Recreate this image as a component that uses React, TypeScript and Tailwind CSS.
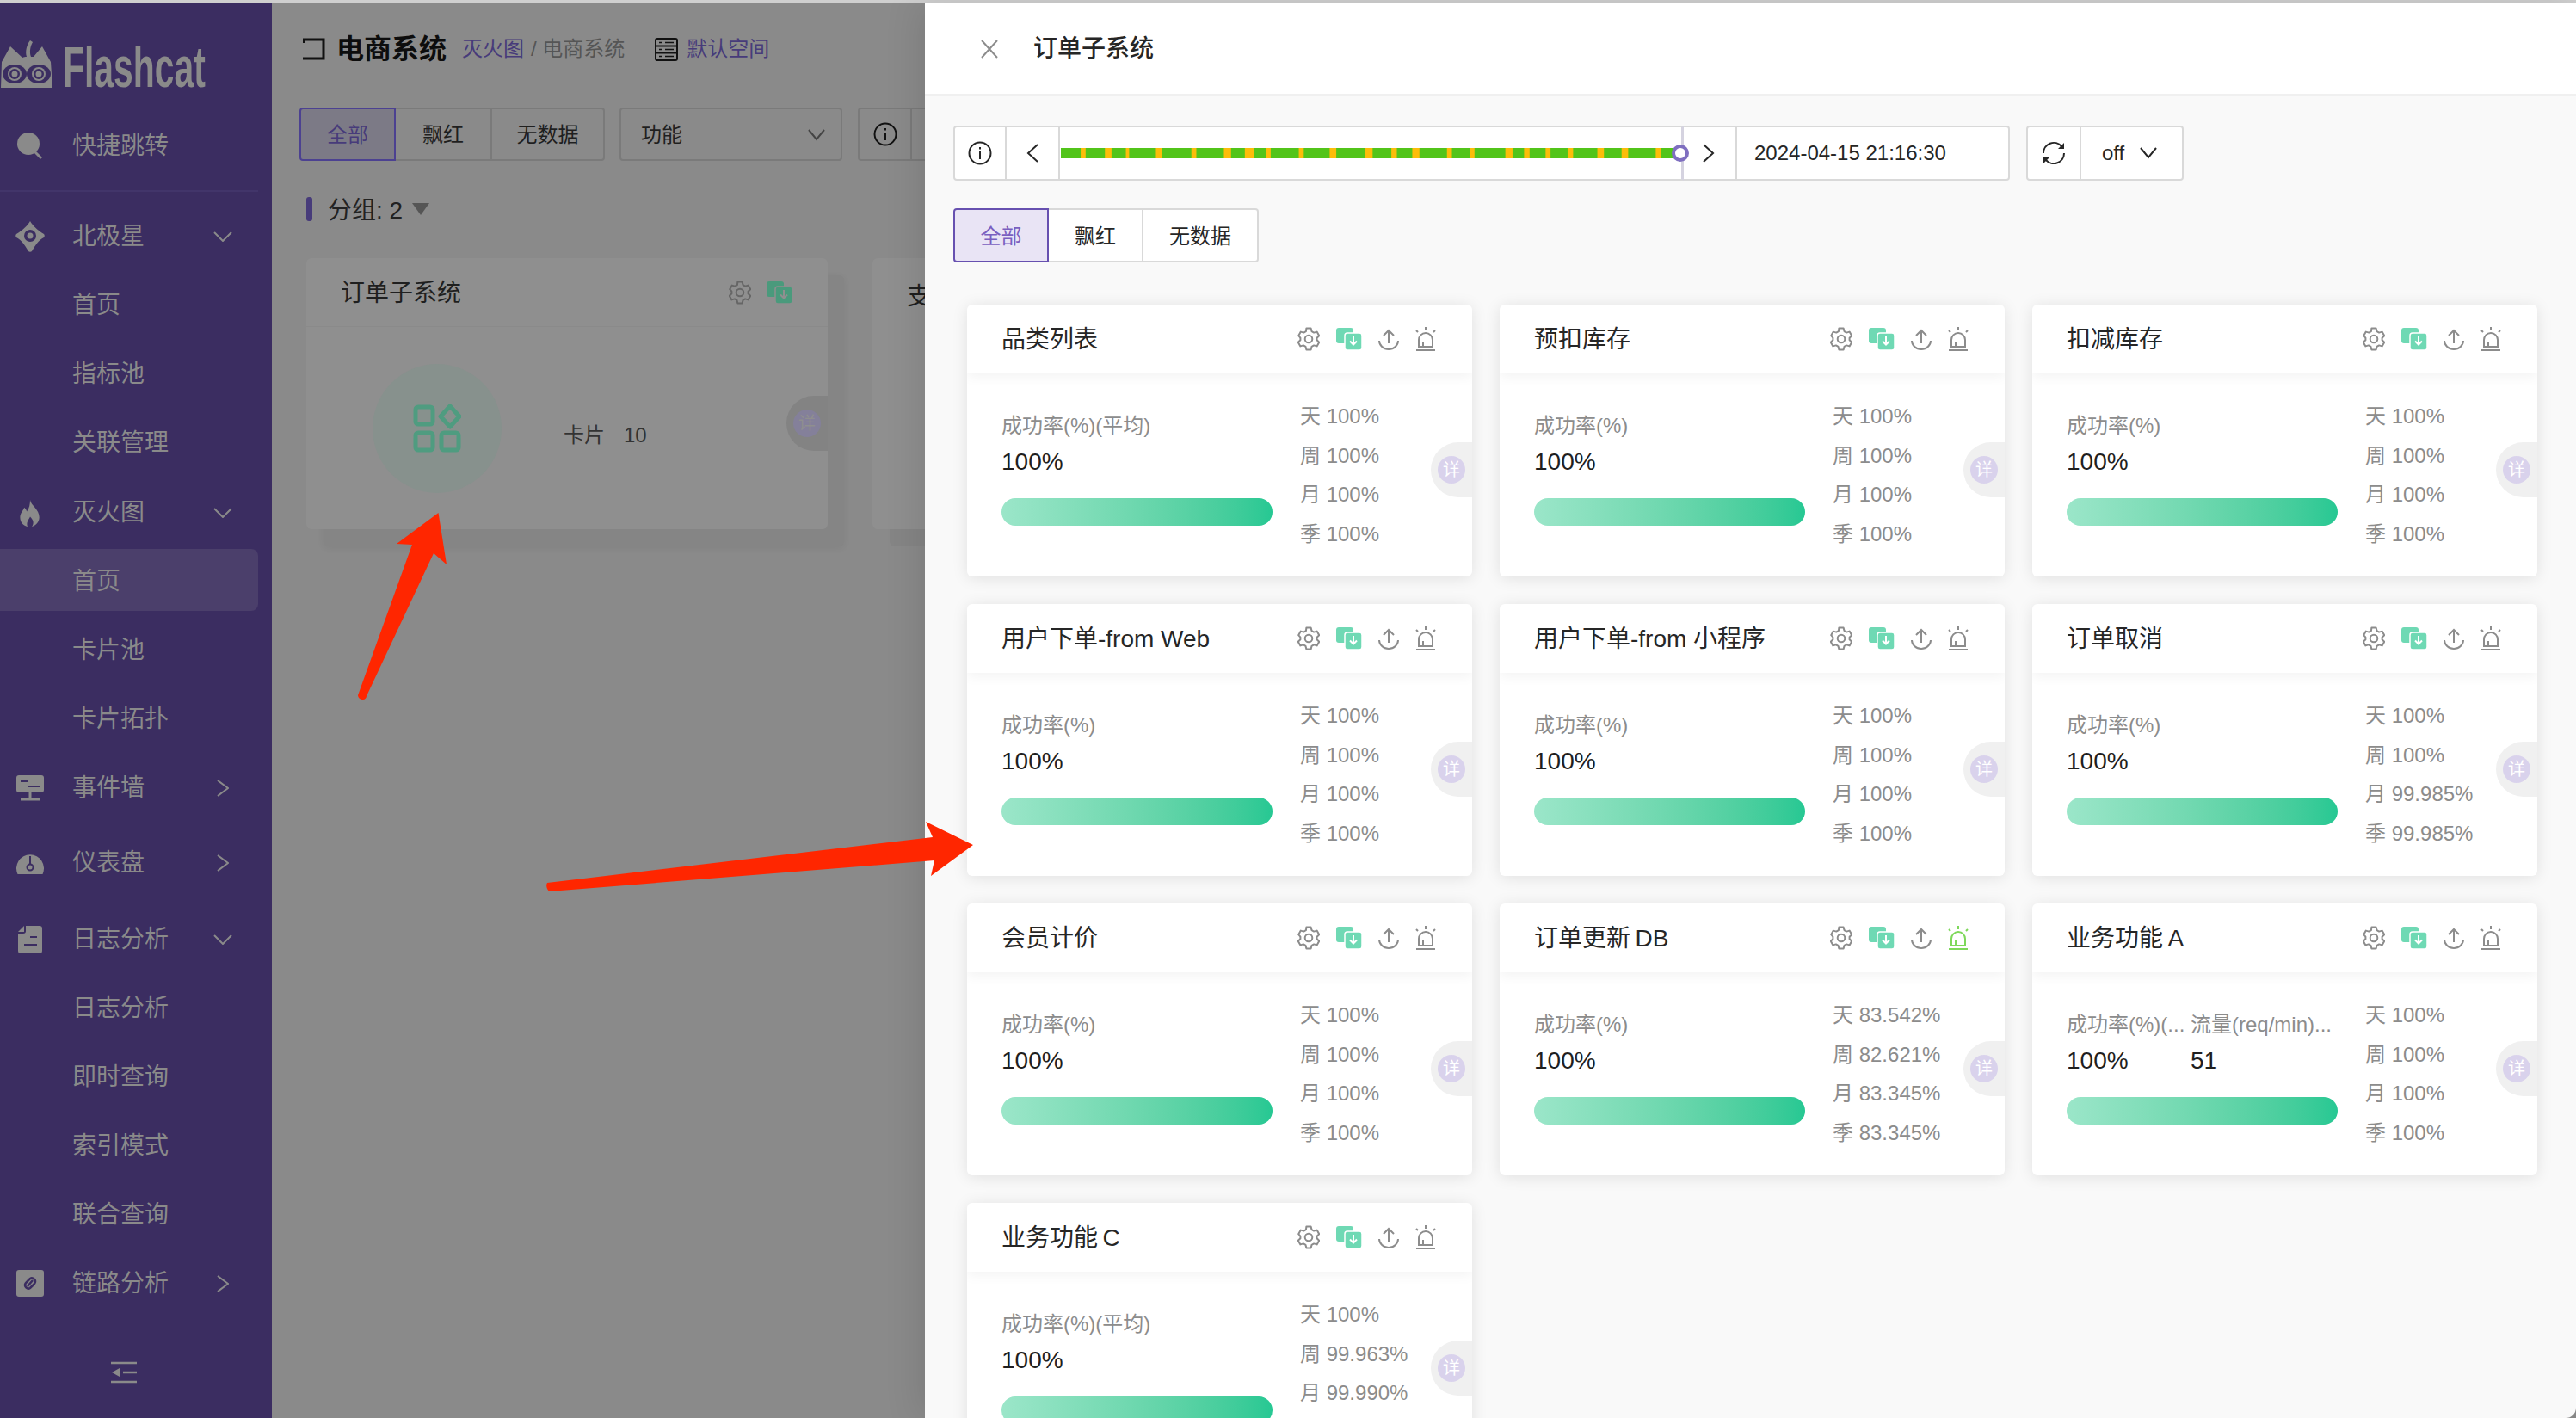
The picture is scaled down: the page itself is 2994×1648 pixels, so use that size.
import React from 'react';

const stripes = [
  [276, 285], [320, 332], [358, 364], [411, 423], [477, 486], [536, 549], [574, 590], [612, 621],
  [672, 681], [728, 740], [793, 806], [840, 850], [878, 891], [941, 950], [982, 991], [1047, 1060],
  [1081, 1091], [1120, 1129], [1160, 1170], [1214, 1226], [1258, 1270], [1320, 1330],
];

const allFull = ['100%', '100%', '100%', '100%'];

const cards = [
  { title: '品类列表', metrics: [{ label: '成功率(%)(平均)', value: '100%' }], stats: allFull },
  { title: '预扣库存', metrics: [{ label: '成功率(%)', value: '100%' }], stats: allFull },
  { title: '扣减库存', metrics: [{ label: '成功率(%)', value: '100%' }], stats: allFull },
  { title: '用户下单-from Web', metrics: [{ label: '成功率(%)', value: '100%' }], stats: allFull },
  { title: '用户下单-from 小程序', metrics: [{ label: '成功率(%)', value: '100%' }], stats: allFull },
  { title: '订单取消', metrics: [{ label: '成功率(%)', value: '100%' }], stats: ['100%', '100%', '99.985%', '99.985%'] },
  { title: '会员计价', metrics: [{ label: '成功率(%)', value: '100%' }], stats: allFull },
  { title: '订单更新\u2009DB', metrics: [{ label: '成功率(%)', value: '100%' }], stats: ['83.542%', '82.621%', '83.345%', '83.345%'], alarm: true },
  {
    title: '业务功能\u2009A',
    metrics: [
      { label: '成功率(%)(...', value: '100%' },
      { label: '流量(req/min)...', value: '51' },
    ],
    stats: allFull,
  },
  // last row is cut by the window, only three stat lines show
  { title: '业务功能\u2009C', metrics: [{ label: '成功率(%)(平均)', value: '100%' }], stats: ['100%', '99.963%', '99.990%'] },
];

const periods = ['天', '周', '月', '季'];

const GearIcon = ({ color = '#8c8c8c' }: { color?: string }) => (
  <svg width="26" height="28" viewBox="0 0 26 28" fill="none" stroke={color} strokeWidth="2" strokeLinejoin="round">
    <path d="M10.4 1.5h5.2l.9 3.6 2.6 1.5 3.5-1 2.6 4.6-2.6 2.5v2.6l2.6 2.5-2.6 4.6-3.5-1-2.6 1.5-.9 3.6h-5.2l-.9-3.6-2.6-1.5-3.5 1-2.6-4.6 2.6-2.5v-2.6L1.2 10.200l2.600-4.600 3.500 1 2.600-1.500z" />
    <circle cx="13" cy="14" r="4.300" />
  </svg>
);

const CopyIcon = ({ color = '#6fd9b4', cut = 'white' }: { color?: string; cut?: string }) => (
  <svg width="30" height="26" viewBox="0 0 30 26">
    <rect x="0" y="0" width="20" height="18" rx="3" fill={color} />
    <rect x="10" y="6" width="20" height="20" rx="3" fill={color} stroke={cut} strokeWidth="1.500" />
    <path d="M20 10v9M16 15.500l4 4 4-4" fill="none" stroke={cut} strokeWidth="2" />
  </svg>
);

const UploadIcon = () => (
  <svg width="24" height="25" viewBox="0 0 24 25" fill="none" stroke="#8c8c8c" strokeWidth="2">
    <path d="M12 17V2M6 8l6-6 6 6" />
    <path d="M1 14a11 10 0 0 0 22 0" />
  </svg>
);

const AlarmIcon = ({ color = '#8c8c8c' }: { color?: string }) => (
  <svg width="24" height="28" viewBox="0 0 24 28" fill="none" stroke={color} strokeWidth="2">
    <path d="M12 0v4M1 4l2 2M23 4l-2 2" />
    <path d="M4 23V15a8 8 0 0 1 16 0v8z" />
    <path d="M9 23v-6" />
    <path d="M1 27h22" />
  </svg>
);

const DetailPill = ({ muted = false }: { muted?: boolean }) => (
  <div
    className={`absolute right-0 top-[80px] flex h-[64px] w-[48px] items-center rounded-l-[32px] pl-[8px] ${
      muted ? 'bg-[#838383]' : 'bg-[#f0f0f0]'
    }`}
  >
    <div
      className={`flex h-[32px] w-[32px] items-center justify-center rounded-[16px] text-[20px] ${
        muted ? 'bg-[#84809a] text-[#8f8f8f]' : 'bg-[#d9d2ec] text-white'
      }`}
    >
      详
    </div>
  </div>
);

const MetricCard = ({ card }: { card: (typeof cards)[number] }) => (
  <div className="h-[316px] w-[587px] overflow-hidden rounded-[6px] bg-white shadow-[0_2px_18px_rgba(0,0,0,0.1)]">
    <div className="relative flex h-[80px] items-center pl-[40px] pr-[42px] shadow-[0_4px_14px_rgba(0,0,0,0.05)]">
      <div className="flex-1 whitespace-nowrap pt-[2px] text-[28px] text-[#262626]">{card.title}</div>
      <div className="flex items-center gap-[19px]">
        <GearIcon />
        <CopyIcon />
        <UploadIcon />
        <AlarmIcon color={card.alarm ? '#7ed85a' : '#8c8c8c'} />
      </div>
    </div>
    <div className="relative flex h-[236px] pl-[40px] pt-[27px]">
      <div className="w-[315px] pt-[16px]">
        <div className="flex">
          {card.metrics.map((m, i) => (
            <div key={m.label} className={card.metrics.length > 1 ? (i === 0 ? 'w-[144px]' : 'w-[171px]') : 'w-full'}>
              <div className="h-[36px] whitespace-nowrap text-[24px] leading-[36px] text-[#8c8c8c]">{m.label}</div>
              <div className="mt-[4px] h-[40px] text-[28px] leading-[40px] text-[#1f1f1f]">{m.value}</div>
            </div>
          ))}
        </div>
        <div className="mt-[22px] h-[32px] rounded-[16px] bg-gradient-to-r from-[#9be6c9] to-[#26c893]" />
      </div>
      <div className="ml-[32px]">
        {card.stats.map((s, i) => (
          <div key={periods[i]} className="h-[45.500px] whitespace-nowrap text-[24px] leading-[45.500px] text-[#8c8c8c]">
            {periods[i]} {s}
          </div>
        ))}
      </div>
      <DetailPill />
    </div>
  </div>
);

const Chevron = ({ open }: { open: boolean }) =>
  open ? (
    <svg width="22" height="12" viewBox="0 0 22 12" fill="none" stroke="#8a8a8a" strokeWidth="2">
      <path d="M1 1l10 10L21 1" />
    </svg>
  ) : (
    <svg width="14" height="20" viewBox="0 0 14 20" fill="none" stroke="#8a8a8a" strokeWidth="2">
      <path d="M1 1l12 9L1 19" />
    </svg>
  );

const navIcons: Record<string, React.ReactNode> = {
  search: (
    <svg width="34" height="34" viewBox="0 0 34 34">
      <circle cx="15" cy="14" r="13" fill="#8a8a8a" />
      <path d="M22 23l8 8" stroke="#8a8a8a" strokeWidth="3" />
    </svg>
  ),
  star: (
    <svg width="34" height="36" viewBox="0 0 34 36">
      <path d="M17 0c3 5 8 10 16 15 1 1 1 3 0 4-6 3-10 9-14 16-1 1-3 1-4 0-4-7-8-13-14-16-1-1-1-3 0-4C9 10 14 5 17 0z" fill="#8a8a8a" />
      <circle cx="17" cy="17" r="7" fill="#3b2d61" />
      <circle cx="17" cy="17" r="3.500" fill="#8a8a8a" />
    </svg>
  ),
  fire: (
    <svg width="30" height="33" viewBox="5 0 24 34">
      <path d="M17 1c1 7 11 11 11 21 0 6-5 10-9 11 3-4 2-8-2-12-2 4-5 7-3 12-5-1-9-5-9-11 0-5 3-7 5-12 2 2 3 4 3 5 3-4 4-9 4-14z" fill="#8a8a8a" />
    </svg>
  ),
  monitor: (
    <svg width="34" height="30" viewBox="0 0 34 30">
      <rect x="1" y="0" width="32" height="20" rx="3" fill="#8a8a8a" />
      <path d="M6 7h9M15 13h13" stroke="#3b2d61" strokeWidth="2" />
      <path d="M17 20v7M6 28h22" stroke="#8a8a8a" strokeWidth="3" />
    </svg>
  ),
  gauge: (
    <svg width="34" height="30" viewBox="0 0 34 30">
      <path d="M2.500 28a16 16 0 1 1 29 0z" fill="#8a8a8a" />
      <path d="M17 7v10" stroke="#3b2d61" strokeWidth="2" />
      <circle cx="17" cy="20" r="3.500" fill="none" stroke="#3b2d61" strokeWidth="2" />
    </svg>
  ),
  file: (
    <svg width="34" height="32" viewBox="0 0 34 32">
      <path d="M12 0h16a3 3 0 0 1 3 3v26a3 3 0 0 1-3 3H6a3 3 0 0 1-3-3V9h6a3 3 0 0 0 3-3z" fill="#8a8a8a" />
      <path d="M3 7l7-7v7z" fill="#8a8a8a" />
      <path d="M17 13h8M10 22h15" stroke="#3b2d61" strokeWidth="2" />
    </svg>
  ),
  link: (
    <svg width="34" height="32" viewBox="0 0 34 32">
      <rect x="1" y="0" width="32" height="31" rx="3" fill="#8a8a8a" />
      <path d="M14 13l3-3c3-2 8 2 5 6l-3 3M20 18l-3 3c-3 2-8-2-5-6l3-3M14 19l6-7" fill="none" stroke="#3b2d61" strokeWidth="2.500" />
    </svg>
  ),
};

const navItems: { label: string; icon?: string; chevron?: 'open' | 'closed'; top: string; active?: boolean }[] = [
  { label: '北极星', icon: 'star', chevron: 'open', top: 'mt-0' },
  { label: '首页', top: 'mt-0' },
  { label: '指标池', top: 'mt-0' },
  { label: '关联管理', top: 'mt-0' },
  { label: '灭火图', icon: 'fire', chevron: 'open', top: 'mt-[1px]' },
  { label: '首页', top: 'mt-0', active: true },
  { label: '卡片池', top: 'mt-0' },
  { label: '卡片拓扑', top: 'mt-0' },
  { label: '事件墙', icon: 'monitor', chevron: 'closed', top: 'mt-0' },
  { label: '仪表盘', icon: 'gauge', chevron: 'closed', top: 'mt-[7px]' },
  { label: '日志分析', icon: 'file', chevron: 'open', top: 'mt-[9px]' },
  { label: '日志分析', top: 'mt-0' },
  { label: '即时查询', top: 'mt-0' },
  { label: '索引模式', top: 'mt-0' },
  { label: '联合查询', top: 'mt-0' },
  { label: '链路分析', icon: 'link', chevron: 'closed', top: 'mt-0' },
];

const Sidebar = () => (
  <aside className="flex h-full w-[316px] shrink-0 flex-col bg-[#3b2d61] text-[28px] text-[#8a8a8a]">
    <div className="flex h-[127px] items-start pt-[43px]">
      <svg width="62" height="58" viewBox="0 0 62 58" className="shrink-0">
        <path
          d="M1 56L2 26 12 8l14 13c2-1 3-1 5-1-2-6 0-14 4-19l3 2c-3 5-4 12-2 17h3L49 8l10 18 2 30z"
          fill="#8a8a8a"
        />
        <ellipse cx="17" cy="40" rx="14" ry="11" fill="#3b2d61" />
        <ellipse cx="45" cy="40" rx="14" ry="11" fill="#3b2d61" />
        <circle cx="17" cy="40" r="8" fill="#8a8a8a" />
        <circle cx="45" cy="40" r="8" fill="#8a8a8a" />
        <circle cx="17" cy="40" r="6" fill="#3b2d61" />
        <circle cx="45" cy="40" r="6" fill="#3b2d61" />
        <circle cx="17" cy="40" r="3.500" fill="#8a8a8a" />
        <circle cx="45" cy="40" r="3.500" fill="#8a8a8a" />
      </svg>
      <div className="ml-[11px] -mt-[6px] origin-left scale-x-[0.61] text-[67px] font-bold leading-[76px]">Flashcat</div>
    </div>
    <div className="flex h-[80px] items-center pl-[18px]">
      <div className="mr-[32px] w-[34px]">{navIcons.search}</div>
      快捷跳转
    </div>
    <div className="mt-[11px] h-[2px] w-[300px] bg-[#42356a]" />
    <div className="mt-[12px]">
      {navItems.map((item, i) => (
        <div
          key={i}
          className={`flex h-[80px] items-center ${item.top} ${item.icon ? 'pl-[18px]' : 'pl-[84px]'}`}
        >
          {item.active && <div className="absolute left-0 h-[72px] w-[300px] -translate-y-[2px] rounded-r-[8px] bg-[#4b3f6b]" />}
          {item.icon && <div className="mr-[32px] flex w-[34px] items-center justify-center">{navIcons[item.icon]}</div>}
          <span className="relative">{item.label}</span>
          {item.chevron && (
            <div className="ml-auto mr-[46px] flex w-[22px] justify-center">
              <Chevron open={item.chevron === 'open'} />
            </div>
          )}
        </div>
      ))}
    </div>
    <div className="mt-[50px] flex pl-[129px]">
      <svg width="30" height="26" viewBox="0 0 30 26" fill="none" stroke="#8a8a8a" strokeWidth="2.500">
        <path d="M0 2h30M14 13h16M0 24h30" />
        <path d="M1 13l9-5v10z" fill="#8a8a8a" stroke="none" />
      </svg>
    </div>
  </aside>
);

const Background = () => (
  <main className="h-full min-w-0 flex-1 overflow-hidden bg-[#8a8a8a] pl-[32px] pt-[34px]">
    <div className="flex h-[40px] items-center">
      <svg width="26" height="26" viewBox="0 0 26 26" fill="none" stroke="#111" strokeWidth="3" className="ml-[4px] shrink-0">
        <path d="M1 6V2h23v22H0" />
      </svg>
      <div className="ml-[13px] text-[32px] font-bold text-[#0d0d0d]">电商系统</div>
      <div className="ml-[18px] text-[24px] text-[#473b7a]">灭火图</div>
      <div className="ml-[8px] text-[24px] text-[#555]">/ 电商系统</div>
      <svg width="27" height="27" viewBox="0 0 27 27" fill="none" stroke="#111" strokeWidth="2" className="ml-[35px] shrink-0">
        <rect x="1" y="1" width="25" height="25" rx="2" />
        <path d="M1 9.500h25M1 17.500h25" />
        <path d="M5 5.500h3M12 5.500h10M5 13.500h3M12 13.500h10M5 21.500h3M12 21.500h10" strokeWidth="1.500" />
      </svg>
      <div className="ml-[10px] text-[24px] text-[#473b7a]">默认空间</div>
    </div>
    <div className="mt-[48px] flex h-[62px] items-stretch text-[24px] text-[#1f1f1f]">
      <div className="flex w-[112px] items-center justify-center rounded-l-[4px] border-2 border-[#4c4191] bg-[#7c7a86] pt-[2px] text-[#473b7a]">全部</div>
      <div className="flex w-[110px] items-center justify-center border-y-2 border-[#7a7a7a] pt-[2px]">飘红</div>
      <div className="flex w-[133px] items-center justify-center rounded-r-[4px] border-2 border-[#7a7a7a] pt-[2px]">无数据</div>
      <div className="ml-[17px] flex w-[259px] items-center justify-between rounded-[4px] border-2 border-[#7a7a7a] pl-[23px] pr-[18px] pt-[2px]">
        功能
        <svg width="20" height="14" viewBox="0 0 20 14" fill="none" stroke="#444" strokeWidth="2">
          <path d="M1 1l9 11 9-11" />
        </svg>
      </div>
      <div className="ml-[18px] flex w-[63px] shrink-0 items-center justify-center rounded-l-[4px] border-2 border-[#7a7a7a]">
        <svg width="28" height="28" viewBox="0 0 28 28" fill="none" stroke="#111" strokeWidth="2">
          <circle cx="14" cy="14" r="12.500" />
          <path d="M14 12v9M14 7v2.500" />
        </svg>
      </div>
      <div className="w-[40px] shrink-0 border-y-2 border-[#7a7a7a]" />
    </div>
    <div className="ml-[8px] mt-[42px] flex h-[28px] items-center text-[28px] text-[#222]">
      <div className="h-[28px] w-[7px] rounded-[3px] bg-[#473b7a]" />
      <div className="ml-[18px] pt-[3px]">分组: 2</div>
      <svg width="20" height="14" viewBox="0 0 20 14" className="ml-[11px]">
        <path d="M0 0h20L10 14z" fill="#555" />
      </svg>
    </div>
    <div className="ml-[8px] mt-[43px] flex gap-[52px]">
      <div className="relative h-[315px] w-[606px] shrink-0">
        <div className="absolute left-[20px] top-[20px] h-[315px] w-[605px] rounded-[6px] bg-[#858585] shadow-[0_2px_8px_rgba(0,0,0,0.06)]" />
        <div className="absolute inset-0 overflow-hidden rounded-[6px] bg-[#8f8f8f]">
          <div className="flex h-[80px] items-center border-b border-[#8a8a8a] pl-[40px] pr-[41px]">
            <div className="flex-1 pt-[2px] text-[28px] text-[#1f1f1f]">订单子系统</div>
            <GearIcon color="#666" />
            <div className="ml-[18px]">
              <CopyIcon color="#4a9a7c" cut="#8f8f8f" />
            </div>
          </div>
          <div className="relative flex pl-[77px] pt-[43px]">
            <div className="flex h-[150px] w-[150px] items-center justify-center rounded-full bg-[#87918d]">
              <svg width="56" height="56" viewBox="0 0 56 56" fill="none" stroke="#4f9c80" strokeWidth="5">
                <rect x="3" y="3" width="20" height="20" rx="3" />
                <rect x="3" y="33" width="20" height="20" rx="3" />
                <rect x="33" y="33" width="20" height="20" rx="3" />
                <path d="M43 2l11 12-11 12-11-12z" strokeLinejoin="round" />
              </svg>
            </div>
            <div className="ml-[72px] mt-[69px] h-[28px] text-[24px] leading-[28px] text-[#333]">卡片</div>
            <div className="ml-[22px] mt-[69px] h-[28px] text-[24px] leading-[28px] text-[#333]">10</div>
            <DetailPill muted />
          </div>
        </div>
      </div>
      <div className="relative h-[315px] w-[606px] shrink-0">
        <div className="absolute left-[20px] top-[20px] h-[315px] w-[605px] rounded-[6px] bg-[#858585]" />
        <div className="absolute inset-0 rounded-[6px] bg-[#8f8f8f] pl-[40px] pt-[24px] text-[28px] text-[#1f1f1f]">支付子系统</div>
      </div>
    </div>
  </main>
);

const Drawer = () => (
  <section className="absolute bottom-0 right-0 top-[3px] w-[1919px] overflow-hidden rounded-br-[12px] bg-[#f9f9f9] shadow-[-8px_0_40px_rgba(0,0,0,0.1)]">
    <div className="flex h-[109px] items-center border-b-[3px] border-[#f0f0f0] bg-white pl-[65px] pt-[2px]">
      <svg width="20" height="22" viewBox="0 0 20 22" fill="none" stroke="#8c8c8c" strokeWidth="2">
        <path d="M1 1l18 20M19 1L1 21" />
      </svg>
      <div className="ml-[41px] text-[28px] font-medium text-[#262626]">订单子系统</div>
    </div>

    <div className="ml-[33px] mt-[34px] flex h-[64px] text-[24px] text-[#262626]">
      <div className="flex w-[62px] items-center justify-center rounded-l-[4px] border-2 border-[#d9d9d9] bg-white">
        <svg width="28" height="28" viewBox="0 0 28 28" fill="none" stroke="#262626" strokeWidth="2">
          <circle cx="14" cy="14" r="12.500" />
          <path d="M14 12v9M14 7v2.500" />
        </svg>
      </div>
      <div className="flex w-[62px] items-center justify-center border-y-2 border-r-2 border-[#d9d9d9] bg-white">
        <svg width="15" height="22" viewBox="0 0 15 22" fill="none" stroke="#262626" strokeWidth="2">
          <path d="M13 1L2 11l11 10" />
        </svg>
      </div>
      <div className="relative flex w-[725px] items-center border-y-2 border-r-[3px] border-y-[#d9d9d9] border-r-[#d5d3e0] bg-white pl-[1px]">
        <svg width="717" height="12" viewBox="240 0 1120 12" preserveAspectRatio="none" className="shrink-0">
          <rect x="240" y="0" width="1120" height="12" fill="#52c41a" />
          {stripes.map(([a, b]) => (
            <rect key={a} x={a} y="0" width={b - a} height="12" fill="#fcbd0a" />
          ))}
        </svg>
        <div className="absolute right-[-9px] top-[20px] h-[20px] w-[20px] rounded-full border-[4px] border-[#7f6fc0] bg-white" />
      </div>
      <div className="flex w-[62px] items-center justify-center border-y-2 border-r-2 border-[#d9d9d9] bg-white pr-[3px]">
        <svg width="15" height="22" viewBox="0 0 15 22" fill="none" stroke="#262626" strokeWidth="2">
          <path d="M2 1l11 10L2 21" />
        </svg>
      </div>
      <div className="flex w-[317px] items-center rounded-r-[4px] border-y-2 border-r-2 border-[#d9d9d9] bg-white pl-[20px]">
        2024-04-15 21:16:30
      </div>
      <div className="ml-[19px] flex w-[64px] items-center justify-center rounded-l-[4px] border-2 border-[#d9d9d9] bg-white">
        <svg width="28" height="30" viewBox="0 0 28 30" fill="none" stroke="#262626" strokeWidth="2">
          <path d="M2 15a12 12 0 0 1 21-8" />
          <path d="M26 15a12 12 0 0 1-21 8" />
          <path d="M26 3v7h-7z" fill="#262626" stroke="none" />
          <path d="M2 27v-7h7z" fill="#262626" stroke="none" />
        </svg>
      </div>
      <div className="flex w-[119px] items-center rounded-r-[4px] border-y-2 border-r-2 border-[#d9d9d9] bg-white pl-[24px]">
        off
        <svg width="20" height="14" viewBox="0 0 20 14" fill="none" stroke="#262626" strokeWidth="2" className="ml-[18px]">
          <path d="M1 1l9 11 9-11" />
        </svg>
      </div>
    </div>

    <div className="ml-[33px] mt-[32px] flex h-[63px] text-[24px] text-[#262626]">
      <div className="flex w-[111px] items-center justify-center rounded-l-[4px] border-2 border-[#6750b0] bg-[#e9e4f5] pt-[2px] text-[#7a5fc0]">全部</div>
      <div className="flex w-[110px] items-center justify-center border-y-2 border-r-2 border-[#d9d9d9] bg-white pt-[2px]">飘红</div>
      <div className="flex w-[134px] items-center justify-center rounded-r-[4px] border-y-2 border-r-2 border-[#d9d9d9] bg-white pt-[2px]">无数据</div>
    </div>

    <div className="ml-[49px] mt-[49px] grid w-[1825px] grid-cols-[repeat(3,587px)] gap-[32px]">
      {cards.map((card) => (
        <MetricCard key={card.title} card={card} />
      ))}
    </div>
  </section>
);

const App = () => (
  <div className="relative h-[1648px] w-[2994px] overflow-hidden bg-[#2c3560] font-['Liberation_Sans','Noto_Sans_CJK_SC',sans-serif]">
    <div className="h-[3px] bg-[#cfcfcf]" />
    <div className="flex h-[1645px]">
      <Sidebar />
      <Background />
    </div>
    <Drawer />
    {/* annotation arrows drawn on the screenshot */}
    <svg width="2994" height="1648" viewBox="0 0 2994 1648" className="pointer-events-none absolute left-0 top-0">
      <path
        d="M509.500 596L461 632l18 1-63 175c0 3 3 5 6 5 2 0 4-2 4-4l78-166 15 13z"
        fill="#ff2600"
      />
      <path
        d="M1131 982l-55-27 8 18-448 53c-2 3 0 9 3 10l447-36-4 18z"
        fill="#ff2600"
      />
    </svg>
  </div>
);

export default App;
